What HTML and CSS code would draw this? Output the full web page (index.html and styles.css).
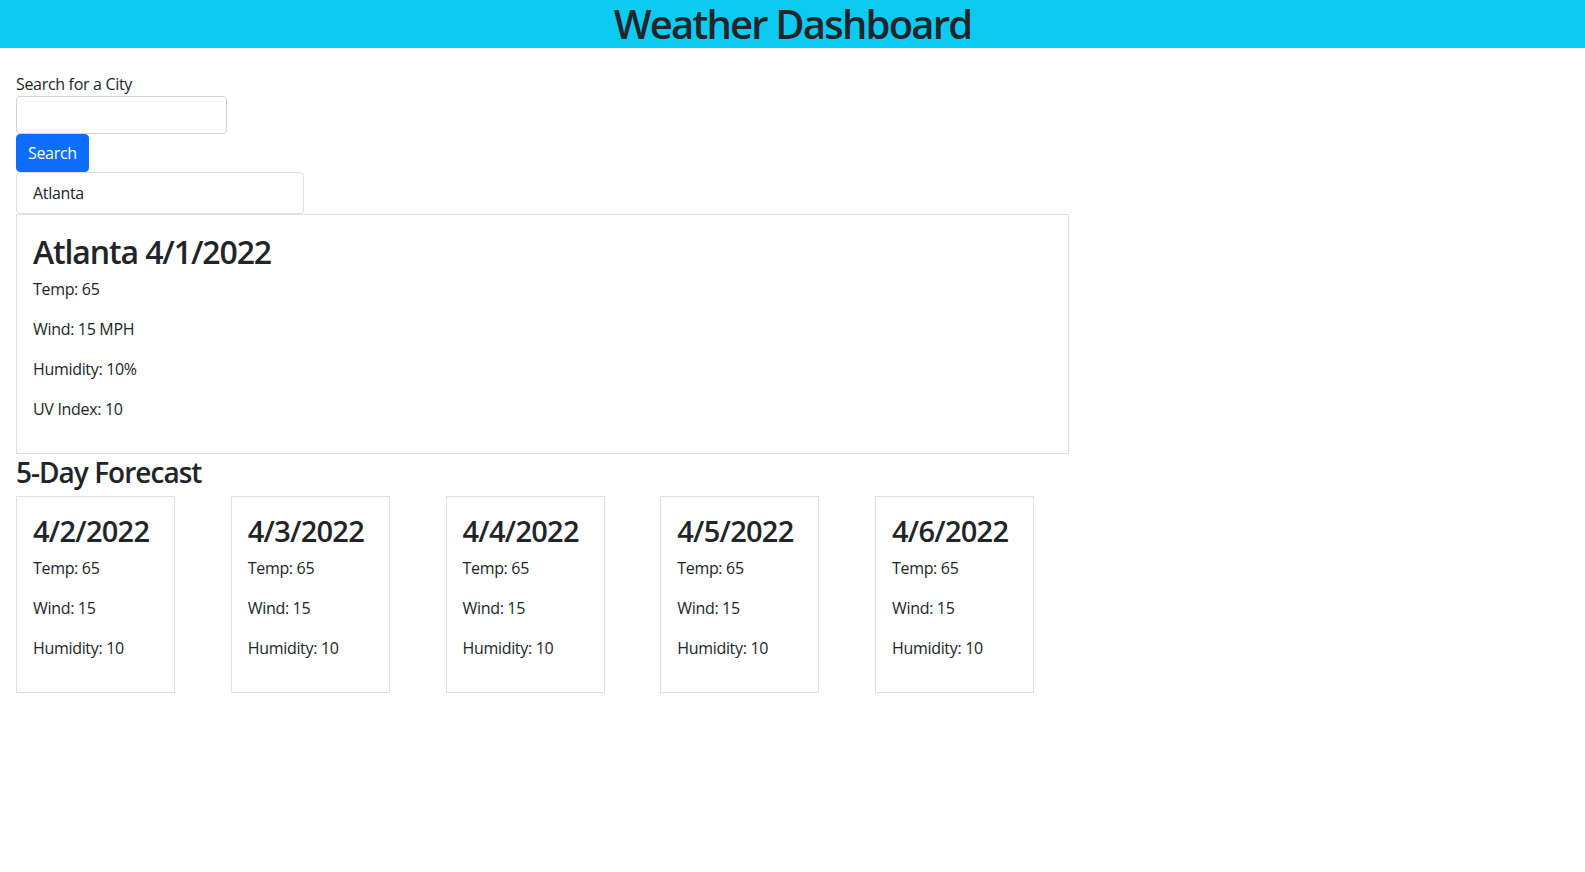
FILE: index.html
```html
<!DOCTYPE html>
<html lang="en">
<head>
<meta charset="utf-8">
<title>Weather Dashboard</title>
<link rel="stylesheet" href="styles.css">
</head>
<body>
<header class="topbar">
  <h1 class="title">Weather Dashboard</h1>
</header>
<main class="page">
  <section class="search">
    <label class="search-label" for="city">Search for a City</label>
    <input class="search-input" id="city" type="text">
    <button class="btn-search" type="button">Search</button>
    <ul class="history">
      <li class="history-item">Atlanta</li>
    </ul>
  </section>
  <section class="current">
    <h2 class="current-title">Atlanta 4/1/2022</h2>
    <p class="stat">Temp: 65</p>
    <p class="stat">Wind: 15 MPH</p>
    <p class="stat">Humidity: 10%</p>
    <p class="stat">UV Index: 10</p>
  </section>
  <h3 class="forecast-title">5-Day Forecast</h3>
  <section class="forecast">
    <div class="day">
      <h4 class="day-date">4/2/2022</h4>
      <p class="stat">Temp: 65</p>
      <p class="stat">Wind: 15</p>
      <p class="stat">Humidity: 10</p>
    </div>
    <div class="day">
      <h4 class="day-date">4/3/2022</h4>
      <p class="stat">Temp: 65</p>
      <p class="stat">Wind: 15</p>
      <p class="stat">Humidity: 10</p>
    </div>
    <div class="day">
      <h4 class="day-date">4/4/2022</h4>
      <p class="stat">Temp: 65</p>
      <p class="stat">Wind: 15</p>
      <p class="stat">Humidity: 10</p>
    </div>
    <div class="day">
      <h4 class="day-date">4/5/2022</h4>
      <p class="stat">Temp: 65</p>
      <p class="stat">Wind: 15</p>
      <p class="stat">Humidity: 10</p>
    </div>
    <div class="day">
      <h4 class="day-date">4/6/2022</h4>
      <p class="stat">Temp: 65</p>
      <p class="stat">Wind: 15</p>
      <p class="stat">Humidity: 10</p>
    </div>
  </section>
</main>
</body>
</html>
```
FILE: styles.css
```css
* {
  box-sizing: border-box;
}

body {
  margin: 0;
  font-family: "Open Sans", "Noto Sans", sans-serif;
  font-size: 16px;
  line-height: 1.5;
  letter-spacing: -0.02em;
  color: #212529;
  background: #fff;
}

.topbar {
  background: #0dcaf0;
  text-align: center;
  height: 48px;
}

.title {
  margin: 0;
  font-size: 40px;
  font-weight: 600;
  line-height: 48px;
  letter-spacing: -0.045em;
}

.page {
  padding: 24px 16px 0;
}

.search {
  display: flex;
  flex-direction: column;
  align-items: flex-start;
}

.search-label {
  display: block;
  padding-top: 1px;
  line-height: 23px;
}

.search-input {
  width: 211px;
  height: 38px;
  margin: 0;
  padding: 6px 12px;
  border: 1px solid #ced4da;
  border-radius: 4px;
  font: inherit;
}

.btn-search {
  height: 38px;
  margin: 0;
  padding: 6px 11px;
  border: 1px solid #0d6efd;
  border-radius: 4px;
  background: #0d6efd;
  color: #fff;
  font: inherit;
  letter-spacing: -0.02em;
  line-height: 24px;
}

.history {
  margin: 0;
  padding: 0;
  list-style: none;
  width: 288px;
}

.history-item {
  padding: 8px 16px;
  border: 1px solid #dfdfdf;
  border-radius: 4px;
  line-height: 24px;
}

.current {
  width: 1053px;
  padding: 16px;
  border: 1px solid #dfdfdf;
}

.current-title {
  margin: 0 0 6px;
  padding-top: 2px;
  font-size: 32px;
  font-weight: 600;
  line-height: 1.2;
  letter-spacing: -0.035em;
}

.stat {
  margin: 0 0 16px;
  line-height: 24px;
}

.forecast-title {
  margin: 2px 0 6px;
  font-size: 28px;
  font-weight: 600;
  line-height: 1.2;
  letter-spacing: -0.035em;
}

.forecast {
  display: grid;
  grid-template-columns: repeat(5, 159px);
  column-gap: 55.75px;
}

.day {
  padding: 16px;
  border: 1px solid #dfdfdf;
}

.day-date {
  margin: 0 0 7px;
  padding-top: 1px;
  font-size: 29px;
  font-weight: 600;
  line-height: 1.2;
  letter-spacing: -0.025em;
}
```
